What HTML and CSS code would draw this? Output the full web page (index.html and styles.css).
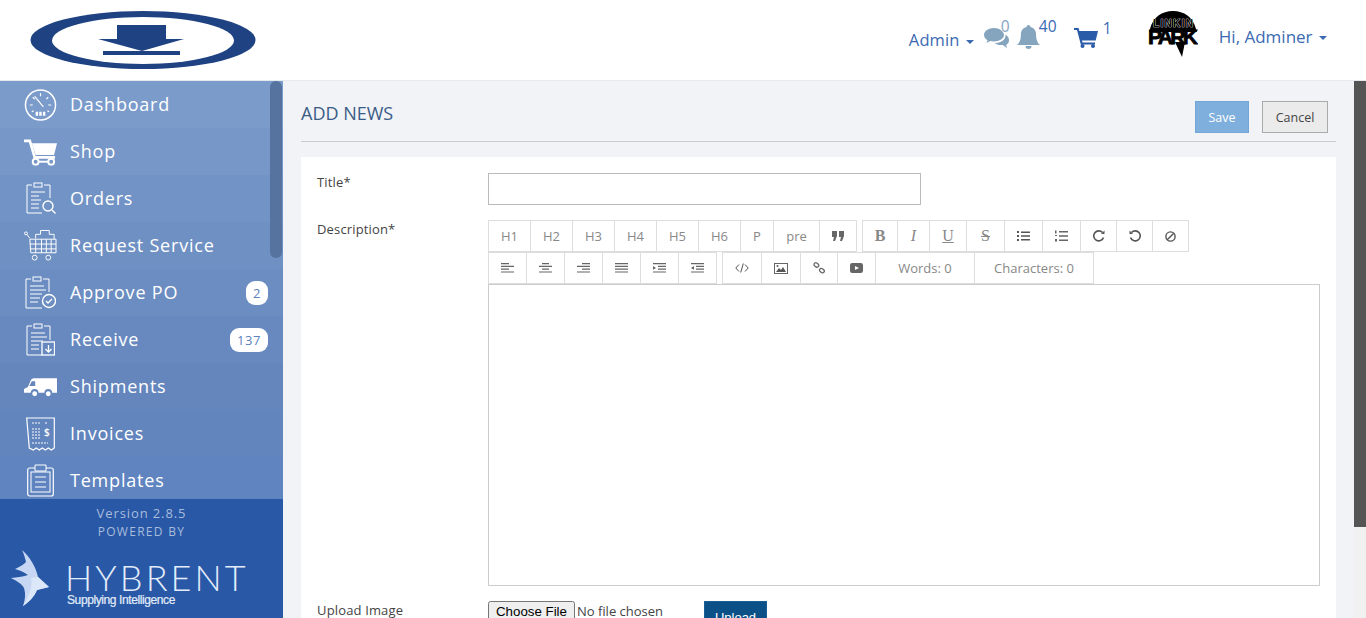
FILE: index.html
```html
<!DOCTYPE html>
<html lang="en">
<head>
    <meta charset="UTF-8">
    <title>Add News</title>
    <link rel="stylesheet" href="styles.css">
</head>
<body>

<header class="topbar">
    <div class="logo">
        <svg width="226" height="58" viewBox="0 0 226 58">
            <ellipse cx="113" cy="29" rx="112.500" ry="29" fill="#1f4283"/>
            <ellipse cx="113" cy="29.500" rx="91" ry="23.500" fill="#fff"/>
            <path d="M87 14H136V28H154L112 40L68 28H87Z" fill="#1f4283"/>
            <rect x="73" y="40" width="77" height="4" fill="#1f4283"/>
        </svg>
    </div>
    <nav class="topnav">
        <a class="admin-link">Admin <span class="caret"></span></a>
        <span class="icon-count msg">
            <svg width="25" height="21" viewBox="0 0 25 21"><path d="M10 0C4.500 0 0 3 0 7c0 2.200 1.500 4 3.500 5.200L2.500 15l3.800-2c1.200.3 2.400.4 3.700.4 5.500 0 10-2.900 10-6.400S15.500 0 10 0Z" fill="#85a5bf"/><path d="M21.500 6.500c.1.300.1.600.1.900 0 4.500-4.900 7.400-11 7.600 1.400 1.300 3.600 2.100 6 2.100.8 0 1.500-.1 2.200-.2L23 20l-.8-3.100C24 15.900 25 14.200 25 12.300c0-2.300-1.300-4.400-3.500-5.800Z" fill="#85a5bf"/></svg>
            <sup class="cnt0">0</sup>
        </span>
        <span class="icon-count bell">
            <svg width="23" height="25" viewBox="0 0 23 25"><path d="M11.500 0a2 2 0 0 1 2 2.100c3.700.8 5.600 3.800 5.600 7.600 0 5.500 1.500 8 3.900 10.300H0C2.400 17.700 3.900 15.200 3.900 9.700c0-3.800 1.900-6.800 5.600-7.600a2 2 0 0 1 2-2.100ZM8.500 21h6a3 3 0 0 1-6 0Z" fill="#85a5bf"/></svg>
            <sup class="cnt40">40</sup>
        </span>
        <span class="icon-count cart">
            <svg width="24" height="21" viewBox="0 0 24 21"><path d="M0 1h4.500l.9 3H24l-2.300 9.500H8l.5 2H21v2H6.800L3 3H0Z" fill="#2a5ba8"/><circle cx="8.500" cy="19" r="2" fill="#2a5ba8"/><circle cx="19" cy="19" r="2" fill="#2a5ba8"/></svg>
            <sup class="cnt1">1</sup>
        </span>
        <svg class="avatar" width="50" height="48" viewBox="0 0 50 48">
            <path d="M2 19C5 7 14 1 25 1c11 0 20 6 23 18l1 3H1Z" fill="#000"/>
            <text class="linkin" x="25" y="17" text-anchor="middle" textLength="40">LINKIN</text>
            <text class="park" x="25" y="34" text-anchor="middle" textLength="50">PARK</text>
            <path d="M27 32h10l-3 15Z" fill="#000"/>
        </svg>
        <a class="user-link">Hi, Adminer <span class="caret"></span></a>
    </nav>
</header>

<div class="layout">
    <aside class="sidebar">
        <div class="menu">
            <a class="menu-item s1">
                <span class="ico"><svg width="34" height="34" viewBox="0 0 34 34" fill="none" stroke="#fff"><circle cx="17" cy="17" r="15.500" stroke-width="1.500"/><path d="M11 8l9 11M17 5v3M6 17h3M28 17h-3M9 9l2 2M25 9l-2 2M8 24l2-1M26 24l-2-1" stroke-width="1.200"/><path d="M12 24h2.500v4H12ZM15.700 24h2.500v4h-2.500ZM19.500 24H22v4h-2.500Z" fill="#fff" stroke="none"/></svg></span>
                <span class="label">Dashboard</span>
            </a>
            <a class="menu-item s2">
                <span class="ico"><svg width="34" height="28" viewBox="0 0 34 28"><path d="M0 1h7l5 17h20v3H10L5 4H0Z" fill="#fff"/><path d="M8 5h26l-3 12H12Z" fill="#fff"/><circle cx="12" cy="24" r="3" fill="none" stroke="#fff" stroke-width="2"/><circle cx="28" cy="24" r="3" fill="none" stroke="#fff" stroke-width="2"/><path d="M15 24h10" stroke="#fff" stroke-width="2"/></svg></span>
                <span class="label">Shop</span>
            </a>
            <a class="menu-item s3">
                <span class="ico"><svg width="30" height="33" viewBox="0 0 30 33" fill="none" stroke="#fff"><path d="M6 3H1v28h15M18 3h6v13"/><rect x="8" y="1" width="8" height="4"/><path d="M5 10h14M5 14h8M5 18h10M5 22h8M5 26h8" stroke-width="1.200"/><circle cx="22" cy="24" r="5" stroke-width="1.400"/><path d="M26 28l3.500 3.500" stroke-width="1.400"/></svg></span>
                <span class="label">Orders</span>
            </a>
            <a class="menu-item s4">
                <span class="ico"><svg width="34" height="33" viewBox="0 0 34 33" fill="none" stroke="#fff"><circle cx="2" cy="4" r="1.500"/><path d="M3 5l3 4M6 10h27v14H7ZM12 10v14M18 10v14M23 10v14M28 10v14M6 15h27M6 20h27"/><path d="M12 9V5h5V1h9v4h5v5"/><circle cx="11" cy="29" r="2.500"/><circle cx="25" cy="29" r="2.500"/></svg></span>
                <span class="label">Request Service</span>
            </a>
            <a class="menu-item s5">
                <span class="ico"><svg width="31" height="33" viewBox="0 0 31 33" fill="none" stroke="#fff"><path d="M6 3H1v29h16M18 3h6v13"/><rect x="8" y="1" width="8" height="4"/><path d="M5 10h14M5 14h16M5 18h12M5 22h10M5 26h8" stroke-width="1.200"/><circle cx="24" cy="25" r="6.500" stroke-width="1.400"/><path d="M21 25l2 2 4-4" stroke-width="1.300"/></svg></span>
                <span class="label">Approve PO</span>
                <b class="badge">2</b>
            </a>
            <a class="menu-item s6">
                <span class="ico"><svg width="29" height="33" viewBox="0 0 29 33" fill="none" stroke="#fff"><path d="M6 3H1v29h15M18 3h6v14"/><rect x="8" y="1" width="8" height="4"/><path d="M5 10h14M5 14h16M5 18h12M5 22h8M5 26h8" stroke-width="1.200"/><rect x="16" y="19" width="12.500" height="13" stroke-width="1.300"/><path d="M22.500 22v7M19.500 26l3 3 3-3" stroke-width="1.300"/></svg></span>
                <span class="label">Receive</span>
                <b class="badge">137</b>
            </a>
            <a class="menu-item s7">
                <span class="ico"><svg width="34" height="20" viewBox="0 0 34 20"><path d="M11 1h23v15H29a4 4 0 0 0-8 0h-6a4 4 0 0 0-8 0H0v-4l4-2 3-7c1-1.500 2-2 4-2Z" fill="#fff"/><path d="M8 4h3.500v5H5.500Z" fill="#6586bc"/><circle cx="11" cy="17" r="2.500" fill="#fff"/><circle cx="25" cy="17" r="2.500" fill="#fff"/></svg></span>
                <span class="label">Shipments</span>
            </a>
            <a class="menu-item s8">
                <span class="ico"><svg width="29" height="34" viewBox="0 0 29 34" fill="none" stroke="#fff"><path d="M.7 1h27.600v30l-3 2-3-2-3 2-3-2-3 2-3-2-3 2-4-2Z" stroke-width="1.200"/><path d="M6 6h8M19 6h3M6 12h9M6 15h9M6 18h9M6 21h9M6 26h16" stroke-width="1.200" stroke-dasharray="2 1"/><text class="dollar" x="18" y="19">$</text></svg></span>
                <span class="label">Invoices</span>
            </a>
            <a class="menu-item s9">
                <span class="ico"><svg width="27" height="33" viewBox="0 0 27 33" fill="none" stroke="#fff"><rect x=".7" y="4" width="25.600" height="28" rx="2" stroke-width="1.200"/><rect x="4" y="8" width="19" height="20" stroke-width="1"/><path d="M8 1h11v6H8Z" fill="#5f84bf"/><path d="M8 13h11M8 18h11M8 23h11"/></svg></span>
                <span class="label">Templates</span>
            </a>
            <div class="thumb"></div>
        </div>
        <div class="side-foot">
            <div class="version">Version 2.8.5</div>
            <div class="powered">POWERED BY</div>
            <div class="brand">
                <svg width="39" height="57" viewBox="0 0 39 57"><path d="M11 0C19 7 25 17 27 27L38 37 26 40C23 47 18 52 12 56 14 50 15 44 13 38 11 34 6 31 0 28 6 27 11 27 17 25 13 22 8 20 4 19 9 17 13 14 15 12 14 8 13 4 11 0Z" fill="#c6d6f3"/><path d="M27 27L38 37 26 40C23 47 18 52 12 56 18 46 22 36 20 28Z" fill="#dde7fa"/></svg>
                <div class="brand-text">
                    <div class="brand-name">HYBRENT</div>
                    <div class="brand-sub">Supplying Intelligence</div>
                </div>
            </div>
        </div>
    </aside>

    <main class="content">
        <div class="page-head">
            <h1>ADD NEWS</h1>
            <div class="head-btns">
                <button class="btn-save">Save</button>
                <button class="btn-cancel">Cancel</button>
            </div>
        </div>
        <div class="card">
            <div class="form-row title-row">
                <label>Title*</label>
                <input class="title-input" type="text">
            </div>
            <div class="form-row desc-row">
                <label>Description*</label>
                <div class="editor">
                    <div class="tools">
                        <div class="tool-group">
                            <span class="w41">H1</span><span class="w42">H2</span><span class="w42">H3</span><span class="w42">H4</span><span class="w42">H5</span><span class="w42">H6</span><span class="w33">P</span><span class="w46">pre</span>
                            <span class="w37"><svg width="12" height="10" viewBox="0 0 12 10"><path d="M0 0h5v5L3 10H1l1-4H0ZM7 0h5v5l-2 5H8l1-4H7Z" fill="#666"/></svg></span>
                        </div>
                        <div class="tool-group">
                            <span class="w34 serif"><b>B</b></span><span class="w32 serif"><i>I</i></span><span class="w37 serif"><u>U</u></span><span class="w38 serif"><s>S</s></span>
                            <span class="w38"><svg width="13" height="10" viewBox="0 0 13 10"><path d="M0 0h2v2H0ZM0 4h2v2H0ZM0 8h2v2H0ZM4 .500h9v1.500H4ZM4 4.250h9v1.500H4ZM4 8h9v1.500H4Z" fill="#555"/></svg></span>
                            <span class="w38"><svg width="13" height="12" viewBox="0 0 13 12"><path d="M0 .500h1.500v3H0ZM0 5h2v1H0ZM0 9h2v2.500H0ZM4 1h9v1.500H4ZM4 5.250h9v1.500H4ZM4 9.500h9v1.500H4Z" fill="#666"/></svg></span>
                            <span class="w36"><svg width="12" height="12" viewBox="0 0 12 12" fill="none" stroke="#555" stroke-width="1.600"><path d="M10.500 7.500A5 5 0 1 1 9.500 2.500"/><path d="M8 4h3.500V.500z" fill="#555" stroke="none"/></svg></span>
                            <span class="w36"><svg width="12" height="12" viewBox="0 0 12 12" fill="none" stroke="#555" stroke-width="1.600"><path d="M1.500 7.500A5 5 0 1 0 2.500 2.500"/><path d="M4 4H.500V.500z" fill="#555" stroke="none"/></svg></span>
                            <span class="w36"><svg width="11" height="11" viewBox="0 0 11 11" fill="none" stroke="#555" stroke-width="1.400"><circle cx="5.500" cy="5.500" r="4.600"/><path d="M2.200 8.800l6.600-6.600"/></svg></span>
                        </div>
                        <div class="tool-group">
                            <span class="w37"><svg width="13" height="10" viewBox="0 0 13 10" fill="#666"><path d="M0 0h8v1.200H0ZM0 2.800h13V4H0ZM0 5.600h8v1.200H0ZM0 8.400h13v1.200H0Z"/></svg></span><span class="w38"><svg width="13" height="10" viewBox="0 0 13 10" fill="#666"><path d="M3 0h7v1.200H3ZM0 2.800h13V4H0ZM3 5.600h7v1.200H3ZM0 8.400h13v1.200H0Z"/></svg></span><span class="w38"><svg width="13" height="10" viewBox="0 0 13 10" fill="#666"><path d="M5 0h8v1.200H5ZM0 2.800h13V4H0ZM5 5.600h8v1.200H5ZM0 8.400h13v1.200H0Z"/></svg></span><span class="w38"><svg width="13" height="10" viewBox="0 0 13 10" fill="#666"><path d="M0 0h13v1.200H0ZM0 2.800h13V4H0ZM0 5.600h13v1.200H0ZM0 8.400h13v1.200H0Z"/></svg></span><span class="w38"><svg width="13" height="10" viewBox="0 0 13 10" fill="#666"><path d="M0 0h13v1.200H0ZM5 2.800h8V4H5ZM5 5.600h8v1.200H5ZM0 8.400h13v1.200H0ZM0 3l3 1.900-3 1.900Z"/></svg></span><span class="w38"><svg width="13" height="10" viewBox="0 0 13 10" fill="#666"><path d="M0 0h13v1.200H0ZM5 2.800h8V4H5ZM5 5.600h8v1.200H5ZM0 8.400h13v1.200H0ZM3 3L0 4.900l3 1.900Z"/></svg></span>
                        </div>
                        <div class="tool-group">
                            <span class="w38"><svg width="14" height="10" viewBox="0 0 14 10" fill="none" stroke="#555" stroke-width="1"><path d="M4 1.500L.8 5 4 8.500M10 1.500L13.200 5 10 8.500M8.300 .500L5.700 9.500"/></svg></span>
                            <span class="w39"><svg width="14" height="11" viewBox="0 0 14 11"><rect x=".5" y=".5" width="13" height="10" fill="none" stroke="#666"/><path d="M2 9l3-4 2 2 2-3 3 5Z" fill="#555"/><circle cx="3.500" cy="3" r="1" fill="#555"/></svg></span>
                            <span class="w37"><svg width="12" height="12" viewBox="0 0 12 12" fill="none" stroke="#666" stroke-width="1.300"><rect x=".8" y="1" width="5" height="3.500" rx="1.700" transform="rotate(35 3 3)"/><rect x="6.200" y="7" width="5" height="3.500" rx="1.700" transform="rotate(35 9 9)"/></svg></span>
                            <span class="w38"><svg width="13" height="10" viewBox="0 0 13 10"><rect width="13" height="10" rx="2.200" fill="#666"/><path d="M5 3l4 2-4 2Z" fill="#fff"/></svg></span>
                            <span class="w99">Words: 0</span><span class="w119">Characters: 0</span>
                        </div>
                    </div>
                    <div class="edit-area"></div>
                </div>
            </div>
            <div class="form-row upload-row">
                <label>Upload Image</label>
                <div class="upload">
                    <input class="file" type="file">
                    <button class="btn-upload">Upload</button>
                </div>
            </div>
        </div>
    </main>
</div>

</body>
</html>
```

FILE: styles.css
```css
html, body { margin: 0; height: 618px; overflow: hidden; }
body { font-family: "Open Sans", sans-serif; background: #fff; color: #333; }
a { text-decoration: none; }

.topbar { height: 80px; display: flex; justify-content: space-between; border-bottom: 1px solid #e6e9ee; box-sizing: content-box; background: #fff; }
.logo { padding: 11px 0 0 30px; }
.topnav { display: flex; align-items: flex-start; padding-right: 39px; color: #2a5ba8; }
.admin-link { font-size: 16.500px; letter-spacing: 0.1px; margin-top: 28px; color: #3b6ab2; }
.user-link { font-size: 17px; margin-top: 25px; margin-left: 21px; color: #3b6ab2; }
.caret { display: inline-block; width: 0; height: 0; margin-left: 2px; vertical-align: middle; border-top: 4px solid; border-left: 4px solid transparent; border-right: 4px solid transparent; }
.icon-count { display: block; position: relative; line-height: 0; }
.icon-count sup { position: absolute; font-size: 15.500px; line-height: 18px; color: #3b6ab2; vertical-align: baseline; }
.msg { margin: 28px 0 0 10px; }
.cnt0 { left: 17px; top: -11px; color: #85a5bf !important; }
.bell { margin: 25px 0 0 8px; }
.cnt40 { left: 22px; top: -8px; }
.cart { margin: 27px 0 0 34px; }
.cnt1 { left: 29px; top: -8px; }
.avatar { margin: 10px 0 0 50px; }
.linkin { font-family: "Liberation Sans", sans-serif; font-weight: 700; font-size: 10px; fill: #000; stroke: #fff; stroke-width: 0.7px; paint-order: stroke; }
.park { font-family: "Liberation Sans", sans-serif; font-weight: 700; font-size: 21px; fill: #000; stroke: #000; stroke-width: 0.8px; }

.layout { display: flex; height: 537px; }
.sidebar { width: 283px; flex: none; display: flex; flex-direction: column; background: #2858a6; }
.menu { position: relative; height: 418px; overflow: hidden; }
.menu-item { height: 47px; display: flex; align-items: center; color: #fff; font-size: 18px; letter-spacing: 0.8px; padding-left: 24px; box-sizing: border-box; }
.ico { width: 33px; flex: none; display: flex; justify-content: center; }
.label { margin: 0 0 2px 13px; flex: 1; }
.s1 { background: #7b9bcb; }
.s2 { background: #7697c8; }
.s3 { background: #7293c5; }
.s4 { background: #6f90c3; }
.s5 { background: #6b8dc1; }
.s6 { background: #6889bf; }
.s7 { background: #6586bc; }
.s8 { background: #6285bd; }
.s9 { background: #5f84bf; }
.dollar { font-family: "Open Sans", sans-serif; font-size: 10px; font-weight: 600; fill: #fff; stroke: none; letter-spacing: 0; }
.badge { margin-right: 15px; background: #fff; color: #5c82bd; font-size: 13px; font-weight: 400; height: 24px; line-height: 25px; min-width: 22px; border-radius: 9px; text-align: center; letter-spacing: 0.6px; }
.s6 .badge { width: 38px; }
.thumb { position: absolute; left: 270px; top: 0; width: 12px; height: 177px; background: #56739f; border-radius: 6px; }

.side-foot { flex: 1; color: #fff; text-align: center; }
.version { font-size: 13px; letter-spacing: 0.9px; color: #a9bcdb; margin-top: 5px; line-height: 18px; }
.powered { font-size: 12px; letter-spacing: 1.300px; color: #a9bcdb; line-height: 18px; margin-top: 1px; }
.brand { display: flex; margin: 9px 0 0 11px; text-align: left; }
.brand-text { margin: 12px 0 0 17px; }
.brand-name { font-family: "Lato", sans-serif; font-weight: 300; font-size: 36px; letter-spacing: 3.100px; line-height: 30px; margin-left: -2px; color: #e3ecfa; }
.brand-sub { font-family: "Liberation Sans", sans-serif; font-size: 12px; letter-spacing: -0.4px; -webkit-text-stroke: 0.2px #e3ecfa; color: #e3ecfa; line-height: 14px; margin-top: 1px; }

.content { flex: 1; background: #f1f3f7; padding: 0 30px 0 18px; position: relative; }
.content::after { content: ""; position: absolute; top: 0; right: 0; width: 12px; height: 537px; background: linear-gradient(#555 0 446px, #f1f1f1 446px); }
.page-head { height: 60px; display: flex; justify-content: space-between; align-items: flex-start; border-bottom: 1px solid #ccc; }
.page-head h1 { margin: 21px 0 0; font-size: 18px; font-weight: 400; color: #3a5b85; line-height: 22px; }
.head-btns { display: flex; gap: 13px; margin: 20px 8px 0 0; }
.head-btns button { height: 32px; font-family: "Open Sans", sans-serif; font-size: 12.500px; padding: 0; }
.btn-save { width: 54px; background: #7fafdc; color: #fff; border: 1px solid #74a7d8; }
.btn-cancel { width: 66px; background: #ebebeb; color: #444; border: 1px solid #aaa; }

.card { margin-top: 15px; background: #fff; height: 480px; padding: 16px 16px; }
.form-row { display: flex; }
.form-row label { width: 171px; flex: none; font-size: 13px; font-weight: 500; letter-spacing: 0.15px; color: #444; line-height: 18px; }
.title-row { height: 47px; }
.title-input { width: 433px; height: 32px; box-sizing: border-box; border: 1px solid #bbb; margin: 0; padding: 0; }
.editor { width: 832px; }
.tools { display: flex; flex-wrap: wrap; gap: 0 5px; width: 832px; }
.tool-group { display: flex; height: 32px; border: 1px solid #ddd; box-sizing: border-box; }
.tool-group span { display: flex; align-items: center; justify-content: center; border-left: 1px solid #ddd; box-sizing: border-box; font-size: 13px; color: #888; height: 30px; }
.tool-group span:first-child { border-left: 0; }
.w32 { width: 32px; } .w33 { width: 33px; } .w34 { width: 34px; } .w36 { width: 36px; }
.w37 { width: 37px; } .w38 { width: 38px; } .w39 { width: 39px; } .w41 { width: 41px; } .w42 { width: 42px; }
.w46 { width: 46px; } .w99 { width: 99px; } .w119 { width: 119px; }
.serif { font-family: "Liberation Serif", serif; font-size: 16px !important; }
.edit-area { height: 302px; box-sizing: border-box; border: 1px solid #ccc; }
.upload-row { margin-top: 15px; }
.upload { display: flex; }
.file { width: 216px; font-family: "Open Sans", sans-serif; font-size: 13px; color: #444; }
.file::file-selector-button { font-family: "Liberation Sans", sans-serif; font-size: 13.300px; margin-right: 2px; }
.btn-upload { width: 63px; height: 32px; background: #0b5087; border: 1px solid #1c5f95; color: #fff; font-size: 13px; font-family: "Liberation Sans", sans-serif; padding: 0; }
```
